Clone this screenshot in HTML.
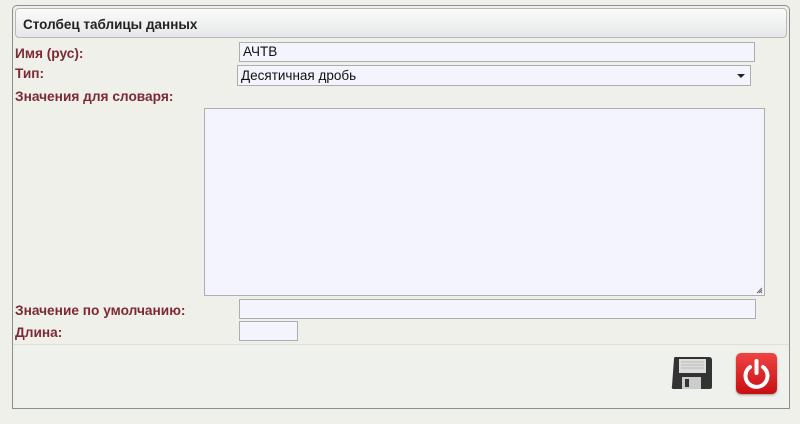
<!DOCTYPE html>
<html><head><meta charset="utf-8"><style>
*{box-sizing:border-box;margin:0;padding:0}
body{width:800px;height:424px;background:#f0f0eb;font-family:"Liberation Sans",Arial,sans-serif;position:relative;overflow:hidden}
.panel{position:absolute;left:12px;top:5px;width:778px;height:404px;border:1px solid #8e8e8e;border-radius:5px 5px 0 0;background:#f0f0eb}
.hdr{position:absolute;left:15px;top:8px;width:772px;height:30px;border:1px solid #b8b8b8;border-radius:4px;background:linear-gradient(#fbfbfb,#e6e7e8);font-weight:bold;font-size:13.5px;color:#222;padding:8px 0 0 7px}
.lbl{position:absolute;left:15px;font-weight:bold;font-size:13.7px;color:#7b2a33}
.inp{position:absolute;background:#f4f4fe;border:1px solid #aeaeae;font-size:13.5px;color:#111;padding:2px 0 0 3px}
.foot{position:absolute;left:13px;top:344px;width:776px;height:64px;background:#eef1ec;border-top:1px solid #e0e0da}
</style></head><body>
<div class="panel"></div>
<div class="hdr">Столбец таблицы данных</div>
<div class="lbl" style="top:46px">Имя (рус):</div>
<div class="lbl" style="top:66px">Тип:</div>
<div class="lbl" style="top:89px">Значения для словаря:</div>
<div class="lbl" style="top:303px">Значение по умолчанию:</div>
<div class="lbl" style="top:325px">Длина:</div>
<div class="inp" style="left:239px;top:42px;width:516px;height:20px;padding-top:1px">АЧТВ</div>
<div class="inp" style="left:237px;top:65px;width:514px;height:21px;padding-top:2px">Десятичная дробь<span style="position:absolute;right:5px;top:8px;width:0;height:0;border-left:4px solid transparent;border-right:4px solid transparent;border-top:4px solid #222"></span></div>
<div class="inp" style="left:204px;top:108px;width:561px;height:188px"><svg style="position:absolute;right:1px;bottom:1px" width="7" height="7"><path d="M1 6L6 1M3 6L6 3M5 6L6 5" stroke="#666"/></svg></div>
<div class="inp" style="left:239px;top:299px;width:517px;height:20px"></div>
<div class="inp" style="left:239px;top:321px;width:59px;height:20px"></div>
<div class="foot"></div>
<svg style="position:absolute;left:671px;top:357px" width="42" height="33" viewBox="0 0 42 33">
<path d="M4 0H38Q41 0 41 3V30Q41 32 39 32H3Q0 32 1 29L3 2Q3 0 4 0Z" fill="#333"/>
<rect x="8" y="2" width="27" height="14" fill="#ddd"/>
<path d="M10 5H33M10 8H33M10 11H33" stroke="#bbb"/>
<rect x="11" y="20" width="19" height="12" fill="#ccc"/>
<rect x="14" y="22" width="4" height="8" fill="#333"/>
</svg>
<div style="position:absolute;left:736px;top:353px;width:41px;height:41px;border-radius:5px;background:linear-gradient(#ee4444,#c80f12);box-shadow:0 1px 2px #999"></div>
<svg style="position:absolute;left:736px;top:353px" width="41" height="41" viewBox="0 0 41 41">
<path d="M14 14A11 11 0 1 0 27 14" fill="none" stroke="#fff" stroke-width="4" stroke-linecap="round"/>
<path d="M20.5 8V20" stroke="#fff" stroke-width="4" stroke-linecap="round"/>
</svg>
</body></html>
